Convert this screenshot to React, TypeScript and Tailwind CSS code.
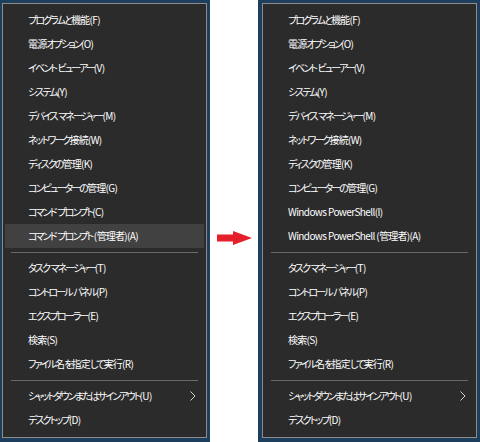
import React from 'react';

type Item = { label: string; sep?: false; active?: boolean; sub?: boolean } | { sep: true };

const left: Item[] = [
  { label: 'プログラムと機能(F)' },
  { label: '電源オプション(O)' },
  { label: 'イベント ビューアー(V)' },
  { label: 'システム(Y)' },
  { label: 'デバイス マネージャー(M)' },
  { label: 'ネットワーク接続(W)' },
  { label: 'ディスクの管理(K)' },
  { label: 'コンピューターの管理(G)' },
  { label: 'コマンド プロンプト(C)' },
  { label: 'コマンド プロンプト (管理者)(A)', active: true },
  { sep: true },
  { label: 'タスク マネージャー(T)' },
  { label: 'コントロール パネル(P)' },
  { label: 'エクスプローラー(E)' },
  { label: '検索(S)' },
  { label: 'ファイル名を指定して実行(R)' },
  { sep: true },
  { label: 'シャットダウンまたはサインアウト(U)', sub: true },
  { label: 'デスクトップ(D)' },
];

const right: Item[] = left.map((it) => {
  if (it.sep) return it;
  if (it.label === 'コマンド プロンプト(C)') return { label: 'Windows PowerShell(I)' };
  if (it.label === 'コマンド プロンプト (管理者)(A)') return { label: 'Windows PowerShell (管理者)(A)', active: false };
  return it;
});

// Japanese glyphs in the shot are much narrower than Latin ones, so tighten them separately
function Label({ text }: { text: string }) {
  const runs = text.match(/[\x20-\x7E]+|[\u4E00-\u9FFF]+|[^\x20-\x7E\u4E00-\u9FFF]+/g) || [];
  return (
    <span>
      {runs.map((r, i) => {
        const cls = /^[\x20-\x7E]+$/.test(r)
          ? 'tracking-[-0.6px]'
          : /^[\u4E00-\u9FFF]+$/.test(r)
          ? 'tracking-[-0.8px]'
          : 'tracking-[-1.9px]';
        return (
          <span key={i} className={cls}>
            {r}
          </span>
        );
      })}
    </span>
  );
}

function Menu({ items, width }: { items: Item[]; width: string }) {
  return (
    <div className={`${width} h-full bg-[#2b2b2b] border border-[#8c8c8c] px-[2px] pt-[4px] text-white text-[10px] [font-family:'Noto_Sans_CJK_JP',sans-serif] [font-feature-settings:'palt']`}>
      {items.map((it, i) =>
        it.sep ? (
          <div key={i} className="h-[8px] flex items-center px-[6px]">
            <div className="h-px w-full bg-[#6a6a6a]" />
          </div>
        ) : (
          <div
            key={i}
            className={`h-[24px] leading-[24px] pl-[23px] pr-[8px] flex items-center justify-between whitespace-nowrap ${it.active ? 'bg-[#414141]' : ''}`}
          >
            <Label text={it.label} />
            {it.sub && (
              <svg width="6" height="10" viewBox="0 0 6 10" fill="none">
                <path d="M0.5 0.5 L5 5 L0.5 9.5" stroke="#d0d0d0" strokeWidth="1" />
              </svg>
            )}
          </div>
        )
      )}
    </div>
  );
}

export default function App() {
  return (
    <div className="w-[480px] h-[442px] bg-white flex overflow-hidden">
      {/* Left screenshot */}
      <div className="w-[210px] h-full bg-[#1d3e5c] pl-[2px] pr-[3px] pt-[3px] pb-[4px]">
        <Menu items={left} width="w-[205px]" />
      </div>

      {/* Arrow */}
      <div className="w-[48px] h-full pt-[231px] pl-[7px]">
        <svg width="36" height="14" viewBox="0 0 36 14">
          <polygon points="0,3.5 16,3.5 16,0 35,7 16,14 16,10.5 0,10.5" fill="#e5202b" />
        </svg>
      </div>

      {/* Right screenshot */}
      <div className="w-[222px] h-full bg-[#1d3e5c] pl-[4px] pr-[3px] pt-[3px] pb-[4px]">
        <Menu items={right} width="w-[215px]" />
      </div>
    </div>
  );
}
